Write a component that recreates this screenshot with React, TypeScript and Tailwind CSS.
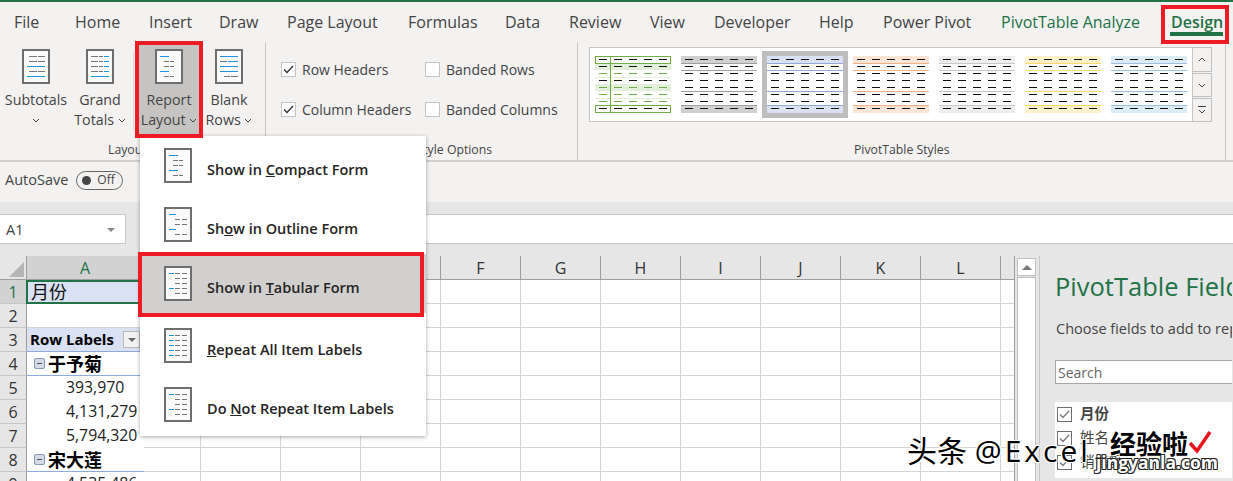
import React from 'react';

const BLUE = '#1f93d8';
const GRAY = '#777777';

type Seg = [number, number, string];

const dash = (a: number, b: number): Seg => [a, b, GRAY];
const blue = (a: number, b: number): Seg => [a, b, BLUE];

const ICONS: Record<string, Seg[][]> = {
  subtotals: [
    [dash(7, 15), dash(16, 23)],
    [dash(7, 15), dash(16, 23)],
    [blue(5, 23)],
    [dash(7, 15), dash(16, 23)],
    [blue(5, 23)],
  ],
  grand: [
    [dash(5, 12), dash(13, 17), blue(18, 23)],
    [dash(5, 12), dash(13, 17), blue(18, 23)],
    [dash(5, 12), dash(13, 17), blue(18, 23)],
    [dash(5, 12), dash(13, 17), blue(18, 23)],
    [blue(5, 23)],
  ],
  compact: [
    [blue(5, 14)],
    [dash(9, 14), dash(15, 19)],
    [dash(9, 14), dash(15, 19)],
    [blue(5, 14)],
    [dash(9, 14), dash(15, 19)],
  ],
  outline: [
    [blue(5, 12)],
    [dash(11, 16), dash(18, 23)],
    [dash(11, 16), dash(18, 23)],
    [blue(5, 12)],
    [dash(11, 16), dash(18, 23)],
  ],
  tabular: [
    [blue(5, 10), dash(11, 16), dash(18, 23)],
    [dash(11, 16), dash(18, 23)],
    [dash(11, 16), dash(18, 23)],
    [blue(5, 10), dash(11, 16), dash(18, 23)],
    [dash(11, 16), dash(18, 23)],
  ],
  repeat: [
    [blue(5, 10), dash(11, 16), dash(18, 23)],
    [blue(5, 10), dash(11, 16), dash(18, 23)],
    [blue(5, 10), dash(11, 16), dash(18, 23)],
    [blue(5, 10), dash(11, 16), dash(18, 23)],
    [blue(5, 10), dash(11, 16), dash(18, 23)],
  ],
  blank: [
    [blue(5, 23)],
    [dash(5, 12), blue(13, 23)],
    [blue(5, 23)],
    [blue(5, 23)],
    [dash(9, 15), dash(16, 23)],
  ],
};

function DocIcon({ name }: { name: string }) {
  return (
    <svg width="28" height="35" viewBox="0 0 28 35" className="shrink-0">
      <rect x="1" y="1" width="26" height="33" fill="#fafafa" stroke="#6e6e6e" strokeWidth="2" />
      {ICONS[name].map((row, i) =>
        row.map(([a, b, c], j) => (
          <rect key={`${i}-${j}`} x={a} y={7 + i * 5} width={b - a} height="1" fill={c} />
        )),
      )}
    </svg>
  );
}

function Chevron({ className = '' }: { className?: string }) {
  return (
    <svg width="8" height="5" viewBox="0 0 8 5" className={`inline-block ${className}`}>
      <path d="M1 1l3 3 3-3" fill="none" stroke="#444" strokeWidth="1" />
    </svg>
  );
}

function CheckBox({ checked, muted, className = '' }: { checked?: boolean; muted?: boolean; className?: string }) {
  return (
    <span className={`flex h-[15px] w-[15px] shrink-0 items-center justify-center border bg-white ${muted ? 'border-[#6e6e6e]' : 'border-[#c4c4c4]'} ${className}`}>
      {checked && (
        <svg width="11" height="9" viewBox="0 0 11 9">
          <path d="M1 4.5l3 3 6-6.5" fill="none" stroke={muted ? '#7a7a7a' : '#333'} strokeWidth="1.3" />
        </svg>
      )}
    </span>
  );
}

// Pivot style swatch: 8 rows of dashes, colored bands and rules
function StyleThumb({ band, line, rule }: { band: string; line: string; rule?: string }) {
  const rowY = [3, 10, 17, 24, 31, 38, 45, 52];
  return (
    <svg width="76" height="57" viewBox="0 0 76 57" className="shrink-0">
      <rect x="0" y="0" width="76" height="7" fill={band} />
      <rect x="0" y="49" width="76" height="8" fill={band} />
      <rect x="0" y="7" width="76" height="1" fill={line} />
      <rect x="0" y="14" width="76" height="1" fill={rule ?? line} />
      <rect x="0" y="35" width="76" height="1" fill={rule ?? line} />
      <rect x="0" y="49" width="76" height="1" fill={line} />
      {rowY.map((y) =>
        [4, 19, 34, 49, 64].map((x) => <rect key={`${x}-${y}`} x={x} y={y} width="8" height="1" fill="#111" />),
      )}
    </svg>
  );
}

function GreenThumb() {
  const rowY = [3, 10, 17, 24, 31, 38, 45, 52];
  const dark = [0, 1, 3, 7];
  return (
    <svg width="76" height="57" viewBox="0 0 76 57" className="shrink-0">
      <rect x="0" y="7" width="76" height="7" fill="#e2efda" />
      <rect x="0" y="28" width="76" height="7" fill="#e2efda" />
      <rect x="0" y="21" width="76" height="1" fill="#e2efda" />
      <rect x="0" y="42" width="76" height="1" fill="#e2efda" />
      {rowY.map((y, i) =>
        [4, 19, 34, 49, 64].map((x) => (
          <rect key={`${x}-${y}`} x={x} y={y} width="8" height="1" fill={dark.includes(i) ? '#111' : '#70ad47'} />
        )),
      )}
      <rect x="15" y="0" width="1" height="57" fill="#70ad47" />
      <rect x="0.5" y="0.5" width="75" height="7" fill="none" stroke="#70ad47" />
      <rect x="0.5" y="49.5" width="75" height="7" fill="none" stroke="#70ad47" />
    </svg>
  );
}

const TABS = [
  { label: 'File', w: 'w-[61px]' },
  { label: 'Home', w: 'w-[74px]' },
  { label: 'Insert', w: 'w-[70px]' },
  { label: 'Draw', w: 'w-[68px]' },
  { label: 'Page Layout', w: 'w-[121px]' },
  { label: 'Formulas', w: 'w-[97px]' },
  { label: 'Data', w: 'w-[64px]' },
  { label: 'Review', w: 'w-[81px]' },
  { label: 'View', w: 'w-[64px]' },
  { label: 'Developer', w: 'w-[105px]' },
  { label: 'Help', w: 'w-[64px]' },
  { label: 'Power Pivot', w: 'w-[118px]' },
  { label: 'PivotTable Analyze', w: 'w-[170px]', green: true },
  { label: 'Design', w: 'w-[60px]', green: true, semibold: true },
];

const COLUMNS = [
  { label: 'A', w: 'w-[117px]' },
  { label: 'B', w: 'w-[57px]' },
  { label: 'C', w: 'w-[80px]' },
  { label: 'D', w: 'w-[80px]' },
  { label: 'E', w: 'w-[80px]' },
  { label: 'F', w: 'w-[80px]' },
  { label: 'G', w: 'w-[80px]' },
  { label: 'H', w: 'w-[80px]' },
  { label: 'I', w: 'w-[80px]' },
  { label: 'J', w: 'w-[80px]' },
  { label: 'K', w: 'w-[80px]' },
  { label: 'L', w: 'w-[80px]' },
  { label: '', w: 'w-[13px]' },
];

function Outline({ text }: { text: string }) {
  return (
    <div className="flex h-full items-center border-b border-[#8ea9db] pl-[7px] text-[18px] font-bold leading-none text-black">
      <span className="mr-[3px] flex h-[11px] w-[11px] items-center justify-center rounded-[2px] border border-[#8496b0] bg-[#d6dce4]">
        <span className="h-px w-[5px] bg-[#44546a]" />
      </span>
      {text}
    </div>
  );
}

function Num({ text }: { text: string }) {
  return <div className="flex h-full items-center pl-[39px] text-[15.8px] text-[#222]">{text}</div>;
}

const ROW_A: Record<number, React.ReactNode> = {
  1: (
    <div className="-ml-px h-full border-2 border-[#217346] bg-[#d9e1f2] pl-[3px] text-[18px] leading-[20px] text-[#111]">月份</div>
  ),
  3: (
    <div className="flex h-full items-center justify-between border-b border-[#8ea9db] bg-[#d9e1f2] pl-[3px] pr-[4px] text-[15px] font-bold text-black">
      Row Labels
      <span className="flex h-[17px] w-[17px] items-center justify-center border border-[#bbb] bg-[#f2f2f2]">
        <span className="h-0 w-0 border-x-[4px] border-t-[4px] border-x-transparent border-t-[#666]" />
      </span>
    </div>
  ),
  4: <Outline text="于予菊" />,
  5: <Num text="393,970" />,
  6: <Num text="4,131,279" />,
  7: <Num text="5,794,320" />,
  8: <Outline text="宋大莲" />,
  9: <Num text="4,535,486" />,
};

const MENU = [
  { icon: 'compact', pre: 'Show in ', u: 'C', post: 'ompact Form' },
  { icon: 'outline', pre: 'Sh', u: 'o', post: 'w in Outline Form' },
  { icon: 'tabular', pre: 'Show in ', u: 'T', post: 'abular Form', active: true },
  { icon: 'repeat', pre: '', u: 'R', post: 'epeat All Item Labels' },
  { icon: 'tabular', pre: 'Do ', u: 'N', post: 'ot Repeat Item Labels' },
];

function RibbonButton({ icon, lines, className = '' }: { icon: string; lines: [string, string]; className?: string }) {
  return (
    <div className={`flex shrink-0 flex-col items-center text-[14.25px] leading-[20px] text-[#444] ${className}`}>
      <DocIcon name={icon} />
      <span className="mt-[6px] whitespace-nowrap">{lines[0]}</span>
      <span className="whitespace-nowrap">
        {lines[1]} <Chevron className="mb-[2px]" />
      </span>
    </div>
  );
}

export default function App() {
  return (
    <div className="relative h-[481px] w-[1233px] overflow-hidden bg-[#f3f2f1] font-['Open_Sans','Noto_Sans_CJK_SC',sans-serif]">
      <div className="h-[2px] bg-[#217346]" />

      {/* Tabs */}
      <div className="flex h-[40px] items-center pl-[14px] text-[16px] text-[#444]">
        {TABS.map((t) => (
          <div key={t.label} className={`relative shrink-0 whitespace-nowrap ${t.w} ${t.green ? 'text-[#217346]' : ''} ${t.semibold ? 'font-semibold' : ''}`}>
            {t.label}
            {t.semibold && <span className="absolute left-[-1px] top-[22px] h-[4px] w-[53px] bg-[#217346]" />}
          </div>
        ))}
      </div>

      {/* Ribbon */}
      <div className="flex h-[118px]">
        <div className="relative flex w-[266px] shrink-0 border-r border-[#c8c6c4] pl-[5px]">
          <RibbonButton icon="subtotals" lines={['Subtotals', '']} className="w-[62px] pt-[7px]" />
          <RibbonButton icon="grand" lines={['Grand', 'Totals']} className="ml-[5px] w-[56px] pt-[7px]" />
          <div className="mx-[5px] mt-[10px] h-[78px] w-px bg-[#dcdad8]" />
          <RibbonButton icon="compact" lines={['Report', 'Layout']} className="mt-[2px] h-[91px] w-[60px] bg-[#c6c4c2] pt-[5px]" />
          <RibbonButton icon="blank" lines={['Blank', 'Rows']} className="ml-[5px] w-[50px] pt-[7px]" />
          <span className="absolute bottom-px left-[108px] text-[12.25px] text-[#444]">Layout</span>
        </div>

        <div className="relative w-[312px] shrink-0 border-r border-[#c8c6c4] pl-[15px] pt-[18px] text-[14px] text-[#444]">
          <div className="grid grid-cols-[144px_auto] gap-y-[22px]">
            <div className="flex h-[18px] items-center gap-[6px]">
              <CheckBox checked /> Row Headers
            </div>
            <div className="flex h-[18px] items-center gap-[6px]">
              <CheckBox /> Banded Rows
            </div>
            <div className="flex h-[18px] items-center gap-[6px]">
              <CheckBox checked /> Column Headers
            </div>
            <div className="flex h-[18px] items-center gap-[6px]">
              <CheckBox /> Banded Columns
            </div>
          </div>
          <span className="absolute bottom-px left-[88px] whitespace-nowrap text-[12.25px]">PivotTable Style Options</span>
        </div>

        <div className="relative w-[648px] shrink-0 border-r border-[#c8c6c4] pl-[11px] pt-[5px]">
          <div className="flex">
            <div className="flex h-[75px] w-[604px] items-center gap-[10px] border border-[#c8c6c4] bg-white pl-[5px]">
              <GreenThumb />
              <StyleThumb band="#d0d0d0" line="#a0a0a0" />
              <div className="-mx-[5px] flex h-[67px] w-[86px] shrink-0 items-center justify-center bg-[#bdbdbd]">
                <div className="bg-white">
                  <StyleThumb band="#d9e1f2" line="#8ea9db" />
                </div>
              </div>
              <StyleThumb band="#fce4d6" line="#f4b084" />
              <StyleThumb band="#ededed" line="#c9c9c9" />
              <StyleThumb band="#fff2cc" line="#ffd966" />
              <StyleThumb band="#ddebf7" line="#9bc2e6" />
            </div>
            <div className="flex w-[19px] flex-col gap-px">
              <div className="flex h-[25px] items-center justify-center border border-l-0 border-[#c0c0c0] bg-[#f3f2f1]">
                <Chevron className="rotate-180" />
              </div>
              <div className="flex h-[24px] items-center justify-center border border-l-0 border-[#c0c0c0] bg-[#f3f2f1]">
                <Chevron />
              </div>
              <div className="flex h-[24px] flex-col items-center justify-center gap-[2px] border border-l-0 border-[#c0c0c0] bg-[#f3f2f1]">
                <span className="h-px w-[8px] bg-[#444]" />
                <Chevron />
              </div>
            </div>
          </div>
          <span className="absolute bottom-px left-[276px] whitespace-nowrap text-[12.25px] text-[#444]">PivotTable Styles</span>
        </div>
      </div>
      <div className="h-[2px] bg-[#d2d0ce]" />

      {/* AutoSave bar */}
      <div className="flex h-[40px] items-center gap-[8px] pb-[4px] pl-[5px] text-[14.5px] text-[#444]">
        AutoSave
        <span className="flex h-[19px] w-[47px] items-center gap-[6px] rounded-full border border-[#666] pl-[5px] text-[12px]">
          <span className="h-[9px] w-[9px] rounded-full bg-[#444]" />
          Off
        </span>
      </div>

      {/* Formula bar */}
      <div className="flex h-[54px] items-start gap-[14px] bg-[#e6e6e6] pt-[12px]">
        <div className="flex h-[30px] w-[126px] shrink-0 items-center justify-between border border-l-0 border-[#c8c8c8] bg-white pl-[6px] pr-[10px] pt-px text-[14.5px] text-[#444]">
          A1
          <span className="h-0 w-0 border-x-[4px] border-t-[4px] border-x-transparent border-t-[#888]" />
        </div>
        <div className="h-[30px] flex-1 border-y border-[#c8c8c8] bg-white" />
      </div>

      {/* Sheet + field panel */}
      <div className="flex h-[225px] bg-[#e6e6e6]">
        <div className="w-[1015px] shrink-0 border-r border-[#9e9e9e]">
          <div className="flex h-[24px] border-b border-[#9e9e9e] text-[16px] text-[#333]">
            <div className="flex w-[27px] shrink-0 items-end justify-end border-r border-[#9e9e9e] pb-[2px] pr-[2px]">
              <span className="h-0 w-0 border-b-[15px] border-l-[15px] border-b-[#b5b5b5] border-l-transparent" />
            </div>
            {COLUMNS.map((c, i) => (
              <div
                key={c.label || 'end'}
                className={`flex shrink-0 items-center justify-center border-r border-[#9e9e9e] last:border-r-0 ${c.w} ${i === 0 ? 'bg-[#d2d2d2] text-[#217346]' : ''}`}
              >
                {c.label}
              </div>
            ))}
          </div>
          {[1, 2, 3, 4, 5, 6, 7, 8, 9].map((r) => (
            <div key={r} className="flex h-[24px] shrink-0">
              <div
                className={`flex w-[27px] shrink-0 items-center justify-center border-b border-r border-b-[#c6c6c6] border-r-[#9e9e9e] text-[16px] ${r === 1 ? 'bg-[#d2d2d2] text-[#217346]' : 'text-[#333]'}`}
              >
                {r}
              </div>
              {COLUMNS.map((c, i) => (
                <div key={c.label || 'end'} className={`shrink-0 whitespace-nowrap bg-white ${c.w} ${i === 0 && ROW_A[r] ? '' : 'border-b border-r border-[#d4d4d4]'} last:border-r-0`}>
                  {i === 0 ? ROW_A[r] : null}
                </div>
              ))}
            </div>
          ))}
        </div>

        {/* Scrollbar */}
        <div className="ml-[2px] mt-[2px] flex w-[19px] shrink-0 flex-col">
          <div className="flex h-[18px] items-center justify-center border border-[#c0c0c0] bg-white">
            <span className="h-0 w-0 border-x-[5px] border-b-[5px] border-x-transparent border-b-[#777]" />
          </div>
          <div className="mt-px flex-1 border-x border-t border-[#c0c0c0] bg-white" />
        </div>

        {/* Field list */}
        <div className="ml-[3px] w-[193px] shrink-0 overflow-hidden whitespace-nowrap border-l border-[#c8c8c8] pl-[15px] pt-[12px]">
          <div className="text-[25.5px] leading-[36px] text-[#217346]">PivotTable Fields</div>
          <div className="ml-px mt-[15px] text-[14.5px] leading-[20px] text-[#444]">Choose fields to add to report:</div>
          <div className="mt-[21px] flex h-[24px] w-[200px] items-center border border-[#a6a6a6] bg-white pl-[2px] text-[14px] text-[#666]">Search</div>
          <div className="mt-[20px] h-[76px] bg-white pl-[2px] text-[14.5px] text-[#444]">
            {['月份', '姓名', '销售额'].map((f, i) => (
              <div key={f} className={`flex h-[24px] items-center gap-[8px] ${i === 0 ? '-mt-[2px] font-bold' : ''}`}>
                <CheckBox checked muted />
                {f}
              </div>
            ))}
          </div>
        </div>
      </div>

      {/* Report Layout dropdown */}
      <div className="absolute left-[140px] top-[136px] h-[300px] w-[286px] bg-white shadow-[0_1px_4px_rgba(0,0,0,0.35)]">
        {MENU.map((m) => (
          <div
            key={m.post}
            className={`flex h-[59px] items-center gap-[15px] pl-[24px] text-[14.5px] font-semibold text-[#252423] ${m.active ? 'mb-[3px] bg-[#d2d0ce]' : ''}`}
          >
            <DocIcon name={m.icon} />
            <span className="mt-[8px] whitespace-nowrap">
              {m.pre}
              <u>{m.u}</u>
              {m.post}
            </span>
          </div>
        ))}
      </div>

      {/* Red callouts */}
      <div className="absolute left-[135px] top-[41px] h-[97px] w-[68px] border-4 border-[#ed1c24]" />
      <div className="absolute left-[1161px] top-[5px] h-[39px] w-[68px] border-4 border-[#ed1c24]" />
      <div className="absolute left-[138px] top-[252px] h-[65px] w-[286px] border-4 border-[#ed1c24]" />

      {/* Watermark */}
      <div className="absolute left-[907px] top-[431px] whitespace-nowrap text-[30px] leading-[40px] text-black [text-shadow:1px_1px_0_#fff,-1px_-1px_0_#fff,1px_-1px_0_#fff,-1px_1px_0_#fff]">
        头条 <span className="tracking-[3px]">@Excel</span>
      </div>
      <div className="absolute left-[1110px] top-[429px] whitespace-nowrap text-[26px] font-bold leading-[30px] text-black [text-shadow:1px_1px_0_#fff,-1px_-1px_0_#fff,1px_-1px_0_#fff,-1px_1px_0_#fff]">
        经验啦
      </div>
      <div className="absolute left-[1096px] top-[450px] whitespace-nowrap text-[17.5px] font-bold leading-[24px] text-white [text-shadow:1px_1px_0_#222,-1px_-1px_0_#222,1px_-1px_0_#222,-1px_1px_0_#222]">
        jingyanla.com
      </div>
      <svg width="26" height="24" viewBox="0 0 26 24" className="absolute left-[1188px] top-[430px]">
        <path d="M2 13l7 8L22 2" fill="none" stroke="#e8141c" strokeWidth="3.5" />
      </svg>
    </div>
  );
}
